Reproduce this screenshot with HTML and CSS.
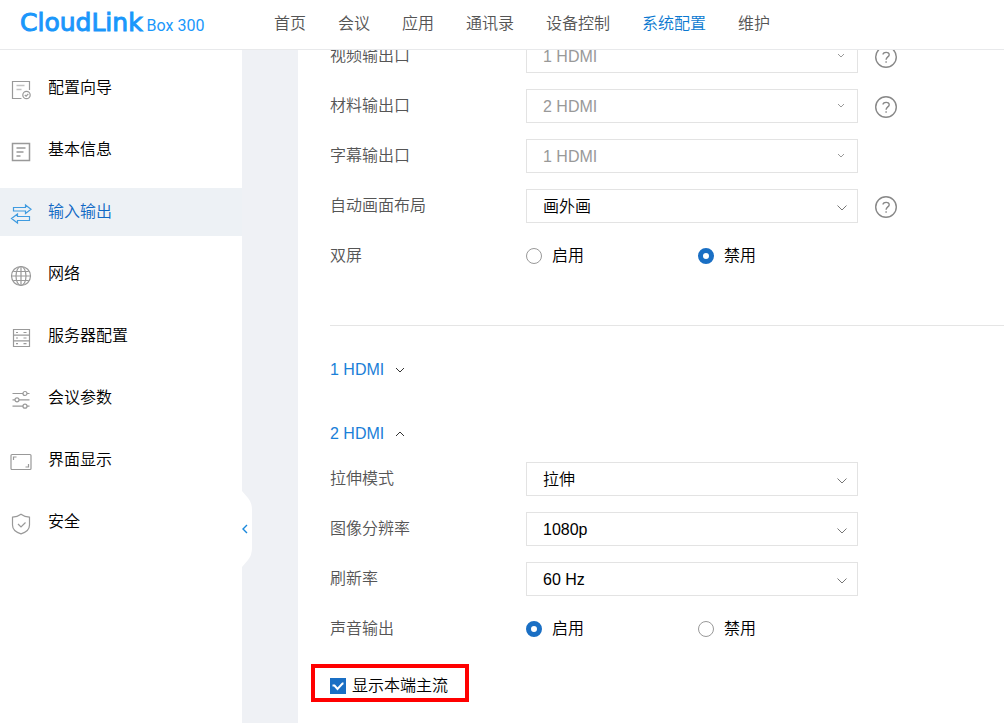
FILE: index.html
```html
<!DOCTYPE html>
<html lang="zh-CN">
<head>
<meta charset="utf-8">
<meta name="viewport" content="width=device-width, initial-scale=1">
<title>CloudLink Box 300</title>
<link rel="stylesheet" href="styles.css">
</head>
<body>
<div class="app">
  <header class="header">
    <a class="brand" href="#"><span class="brand-name">CloudLink</span><span class="brand-model">Box 300</span></a>
    <nav class="nav">
      <a href="#">首页</a>
      <a href="#">会议</a>
      <a href="#">应用</a>
      <a href="#">通讯录</a>
      <a href="#">设备控制</a>
      <a class="current" href="#">系统配置</a>
      <a href="#">维护</a>
    </nav>
  </header>
  <div class="body">
    <aside class="sidebar">
      <nav class="menu">
        <a class="menu-item" href="#">
          <svg class="icon" viewBox="0 0 22 22"><path d="M19.500 11V2.500h-17v17h9"/><path d="M6.500 6.500h8M6.500 10.500h5" stroke-width="1.600" opacity=".6"/><circle cx="16.500" cy="16" r="3.700"/><path d="M14.800 16l1.300 1.200 2.200-2.400"/></svg>
          <span>配置向导</span>
        </a>
        <a class="menu-item" href="#">
          <svg class="icon" viewBox="0 0 22 22"><path d="M2.500 2.500h17v17h-17zM6.500 7h9M6.500 11h7M6.500 15h4" stroke-width="1.500"/></svg>
          <span>基本信息</span>
        </a>
        <a class="menu-item active" href="#">
          <svg class="icon" viewBox="0 0 22 22"><path d="M3.500 4.500h12V2l5.500 4.300-5.500 4.200V8h-12zM19.500 13.500h-12V11L1.500 15.500l6 4.500v-2.500h12z"/></svg>
          <span>输入输出</span>
        </a>
        <a class="menu-item" href="#">
          <svg class="icon" viewBox="0 0 22 22"><circle cx="11" cy="11" r="9.500"/><ellipse cx="11" cy="11" rx="5" ry="9.500"/><path d="M11 1.500v19M1.500 11h19M3.300 6.500h15.400M3.300 15.500h15.400"/></svg>
          <span>网络</span>
        </a>
        <a class="menu-item" href="#">
          <svg class="icon" viewBox="0 0 22 22"><path d="M3.500 2.500h16v17h-16zM3.500 8.200h16M3.500 13.800h16M6 5.500h2M13.500 5.500h3M6 11h2M13.500 11h3M6 16.700h2M13.500 16.700h3"/></svg>
          <span>服务器配置</span>
        </a>
        <a class="menu-item" href="#">
          <svg class="icon" viewBox="0 0 22 22"><path d="M2.500 4.500H13M17 4.500h2.500M2.500 10.800H5M9 10.800h10.500M2.500 17.200H13M17 17.200h2.500"/><circle cx="15" cy="4.500" r="2"/><circle cx="7" cy="10.800" r="2"/><circle cx="15" cy="17.200" r="2"/></svg>
          <span>会议参数</span>
        </a>
        <a class="menu-item" href="#">
          <svg class="icon" viewBox="0 0 22 22"><rect x="1" y="3.500" width="20" height="15" rx="1"/><path d="M3.500 9V6h3M18.500 13v3h-3"/></svg>
          <span>界面显示</span>
        </a>
        <a class="menu-item" href="#">
          <svg class="icon" viewBox="0 0 22 22"><path d="M11 1.200c2.500 1.900 5.500 2.800 8.500 3V12c0 4.200-3.600 7.400-8.500 8.800C6.100 19.400 2.500 16.200 2.500 12V4.200c3-.2 6-1.100 8.500-3z"/><path d="M8 11l3 3 4.500-4.500"/></svg>
          <span>安全</span>
        </a>
      </nav>
      <button class="collapse" type="button" aria-label="收起菜单">
        <svg viewBox="0 0 10 76"><path class="tab" d="M0 0l6 7q4 5 4 12v38q0 7-4 12l-6 7z"/><path class="arrow" d="M5 34L1 38 5 42"/></svg>
      </button>
    </aside>
    <main class="content">
      <form class="form">
        <div class="rows scrolled">
          <div class="row">
            <label class="label" for="video-out">视频输出口</label>
            <div class="select"><select id="video-out" disabled><option>1 HDMI</option></select><svg viewBox="0 0 10 10"><path d="M2 3l3 3 3-3"/></svg></div>
            <button class="help" type="button" aria-label="帮助"><svg viewBox="0 0 22 22"><circle cx="11" cy="11" r="10.300"/><path d="M8 8.500C8 6 14.200 5.200 14.200 8.700c0 2.300-3.100 2.200-3.100 5.100M11.100 15.200v1.500"/></svg></button>
          </div>
          <div class="row">
            <label class="label" for="material-out">材料输出口</label>
            <div class="select"><select id="material-out" disabled><option>2 HDMI</option></select><svg viewBox="0 0 10 10"><path d="M2 3l3 3 3-3"/></svg></div>
            <button class="help" type="button" aria-label="帮助"><svg viewBox="0 0 22 22"><circle cx="11" cy="11" r="10.300"/><path d="M8 8.500C8 6 14.200 5.200 14.200 8.700c0 2.300-3.100 2.200-3.100 5.100M11.100 15.200v1.500"/></svg></button>
          </div>
          <div class="row">
            <label class="label" for="caption-out">字幕输出口</label>
            <div class="select"><select id="caption-out" disabled><option>1 HDMI</option></select><svg viewBox="0 0 10 10"><path d="M2 3l3 3 3-3"/></svg></div>
          </div>
          <div class="row">
            <label class="label" for="layout">自动画面布局</label>
            <div class="select"><select id="layout"><option>画外画</option></select><svg viewBox="0 0 10 10"><path d="M.5 3.500L5 8l4.500-4.500"/></svg></div>
            <button class="help" type="button" aria-label="帮助"><svg viewBox="0 0 22 22"><circle cx="11" cy="11" r="10.300"/><path d="M8 8.500C8 6 14.200 5.200 14.200 8.700c0 2.300-3.100 2.200-3.100 5.100M11.100 15.200v1.500"/></svg></button>
          </div>
          <div class="row" role="radiogroup" aria-labelledby="dual">
            <span class="label" id="dual">双屏</span>
            <label class="radio"><input type="radio" name="dual">启用</label>
            <label class="radio"><input type="radio" name="dual" checked>禁用</label>
          </div>
        </div>
        <hr class="divider">
        <div class="ports">
          <button class="port" type="button" aria-expanded="false">1 HDMI<svg viewBox="0 0 10 10"><path d="M1 3l4 4 4-4"/></svg></button>
          <button class="port" type="button" aria-expanded="true">2 HDMI<svg viewBox="0 0 10 10"><path d="M1 7l4-4 4 4"/></svg></button>
        </div>
        <div class="rows">
          <div class="row">
            <label class="label" for="stretch">拉伸模式</label>
            <div class="select"><select id="stretch"><option>拉伸</option></select><svg viewBox="0 0 10 10"><path d="M.5 3.500L5 8l4.500-4.500"/></svg></div>
          </div>
          <div class="row">
            <label class="label" for="resolution">图像分辨率</label>
            <div class="select"><select id="resolution"><option>1080p</option></select><svg viewBox="0 0 10 10"><path d="M.5 3.500L5 8l4.500-4.500"/></svg></div>
          </div>
          <div class="row">
            <label class="label" for="refresh">刷新率</label>
            <div class="select"><select id="refresh"><option>60 Hz</option></select><svg viewBox="0 0 10 10"><path d="M.5 3.500L5 8l4.500-4.500"/></svg></div>
          </div>
          <div class="row" role="radiogroup" aria-labelledby="audio">
            <span class="label" id="audio">声音输出</span>
            <label class="radio"><input type="radio" name="audio" checked>启用</label>
            <label class="radio"><input type="radio" name="audio">禁用</label>
          </div>
        </div>
        <label class="mainstream">
          <span class="check"><input type="checkbox" checked><svg viewBox="0 0 16 16"><path d="M2.500 7.500h2l3 3.500 5-5.500h1"/></svg></span>显示本端主流
        </label>
      </form>
    </main>
  </div>
</div>
</body>
</html>
```
FILE: styles.css
```css
* {
  box-sizing: border-box;
}

body {
  margin: 0;
  font: 350 16px/24px "Liberation Sans", "Noto Sans CJK SC", sans-serif;
  color: #000;
  background: #eff1f5;
}

a {
  color: inherit;
  text-decoration: none;
}

button,
select {
  font: inherit;
}

button {
  padding: 0;
  border: 0;
  background: none;
}

svg {
  display: block;
  fill: none;
  stroke: currentColor;
}

.app {
  display: flex;
  flex-direction: column;
  height: 100vh;
  overflow: hidden;
}

.header {
  flex: none;
  display: flex;
  align-items: center;
  height: 50px;
  padding-bottom: 2px;
  background: #fff;
  border-bottom: 1px solid #e8e9eb;
}

.brand {
  flex: 0 0 274px;
  display: flex;
  align-items: baseline;
  gap: 4px;
  padding-left: 20px;
  color: #1a97fb;
}

.brand-name {
  font: 25px/28px "DejaVu Sans", sans-serif;
  -webkit-text-stroke: 1px currentColor;
}

.brand-model {
  font: 16px/24px Roboto, sans-serif;
}

.nav {
  display: flex;
  gap: 32px;
  color: #555;
  white-space: nowrap;
}

.nav .current {
  color: #0a78d0;
}

.body {
  flex: 1;
  display: flex;
  gap: 56px;
  min-height: 0;
}

.sidebar {
  position: relative;
  flex: 0 0 242px;
  padding-top: 14px;
  background: #fff;
}

.menu {
  display: flex;
  flex-direction: column;
  gap: 14px;
}

.menu-item {
  display: flex;
  align-items: center;
  gap: 16px;
  height: 48px;
  padding-left: 10px;
}

.menu-item.active {
  color: #1068c4;
  background: #edf1f5;
}

.icon {
  width: 22px;
  height: 22px;
  margin-top: 4px;
  color: #999;
  stroke-width: 1.200;
}

.active .icon {
  color: #3f9be0;
}

.collapse {
  position: absolute;
  top: 441px;
  left: 100%;
  width: 10px;
  height: 76px;
}

.collapse .tab {
  fill: #fff;
  stroke: none;
}

.collapse .arrow {
  stroke: #1a88dc;
  stroke-width: 1.400;
}

.content {
  flex: 1;
  min-width: 0;
  overflow: hidden;
  padding-left: 32px;
  background: #fff;
}

.rows {
  display: flex;
  flex-direction: column;
  gap: 16px;
}

.rows.scrolled {
  margin-top: -11px;
}

.row {
  display: flex;
  align-items: center;
  height: 34px;
}

.label {
  flex: 0 0 196px;
  color: #555;
}

.select {
  position: relative;
  flex: 0 1 332px;
}

.select select {
  display: block;
  width: 100%;
  height: 34px;
  padding: 2px 32px 0 16px;
  border: 1px solid #e3e3e3;
  border-radius: 0;
  appearance: none;
  color: #000;
  background: #fff;
  opacity: 1;
}

.select select:disabled {
  color: #999;
}

.select svg {
  position: absolute;
  top: 13px;
  right: 11px;
  width: 10px;
  height: 10px;
  color: #777;
  pointer-events: none;
}

.select select:disabled + svg {
  top: 12px;
  right: 12px;
  color: #999;
}

.help {
  width: 22px;
  height: 22px;
  margin: 2px 0 0 17px;
  color: #888;
}

.help svg {
  stroke-width: 1.400;
}

.radio {
  flex: 0 0 172px;
  display: flex;
  align-items: center;
  gap: 10px;
}

.radio input {
  width: 16px;
  height: 16px;
  margin: 0;
  appearance: none;
  border: 1px solid #999;
  border-radius: 50%;
  background: #fff;
}

.radio input:checked {
  border: 5px solid #1a6fc4;
}

.divider {
  height: 1px;
  margin: 52px 0 32px;
  border: 0;
  background: #e5e5e5;
}

.ports {
  display: flex;
  flex-direction: column;
  align-items: flex-start;
  gap: 40px;
  margin-bottom: 16px;
}

.port {
  display: flex;
  align-items: center;
  gap: 11px;
  color: #1a80d8;
}

.port svg {
  width: 10px;
  height: 10px;
  color: #333;
}

.mainstream {
  display: inline-flex;
  align-items: center;
  gap: 6px;
  margin: 18px 0 0 -19px;
  padding: 6px 17px 0 15px;
  border: 4px solid #f00;
}

.check {
  position: relative;
  width: 16px;
  height: 16px;
}

.check input {
  display: block;
  width: 16px;
  height: 16px;
  margin: 0;
  appearance: none;
  border: 1px solid #999;
}

.check input:checked {
  border-color: #1a6fc4;
  background: #1a6fc4;
}

.check svg {
  position: absolute;
  inset: 0;
  color: #fff;
  stroke-width: 2;
  pointer-events: none;
}
```
